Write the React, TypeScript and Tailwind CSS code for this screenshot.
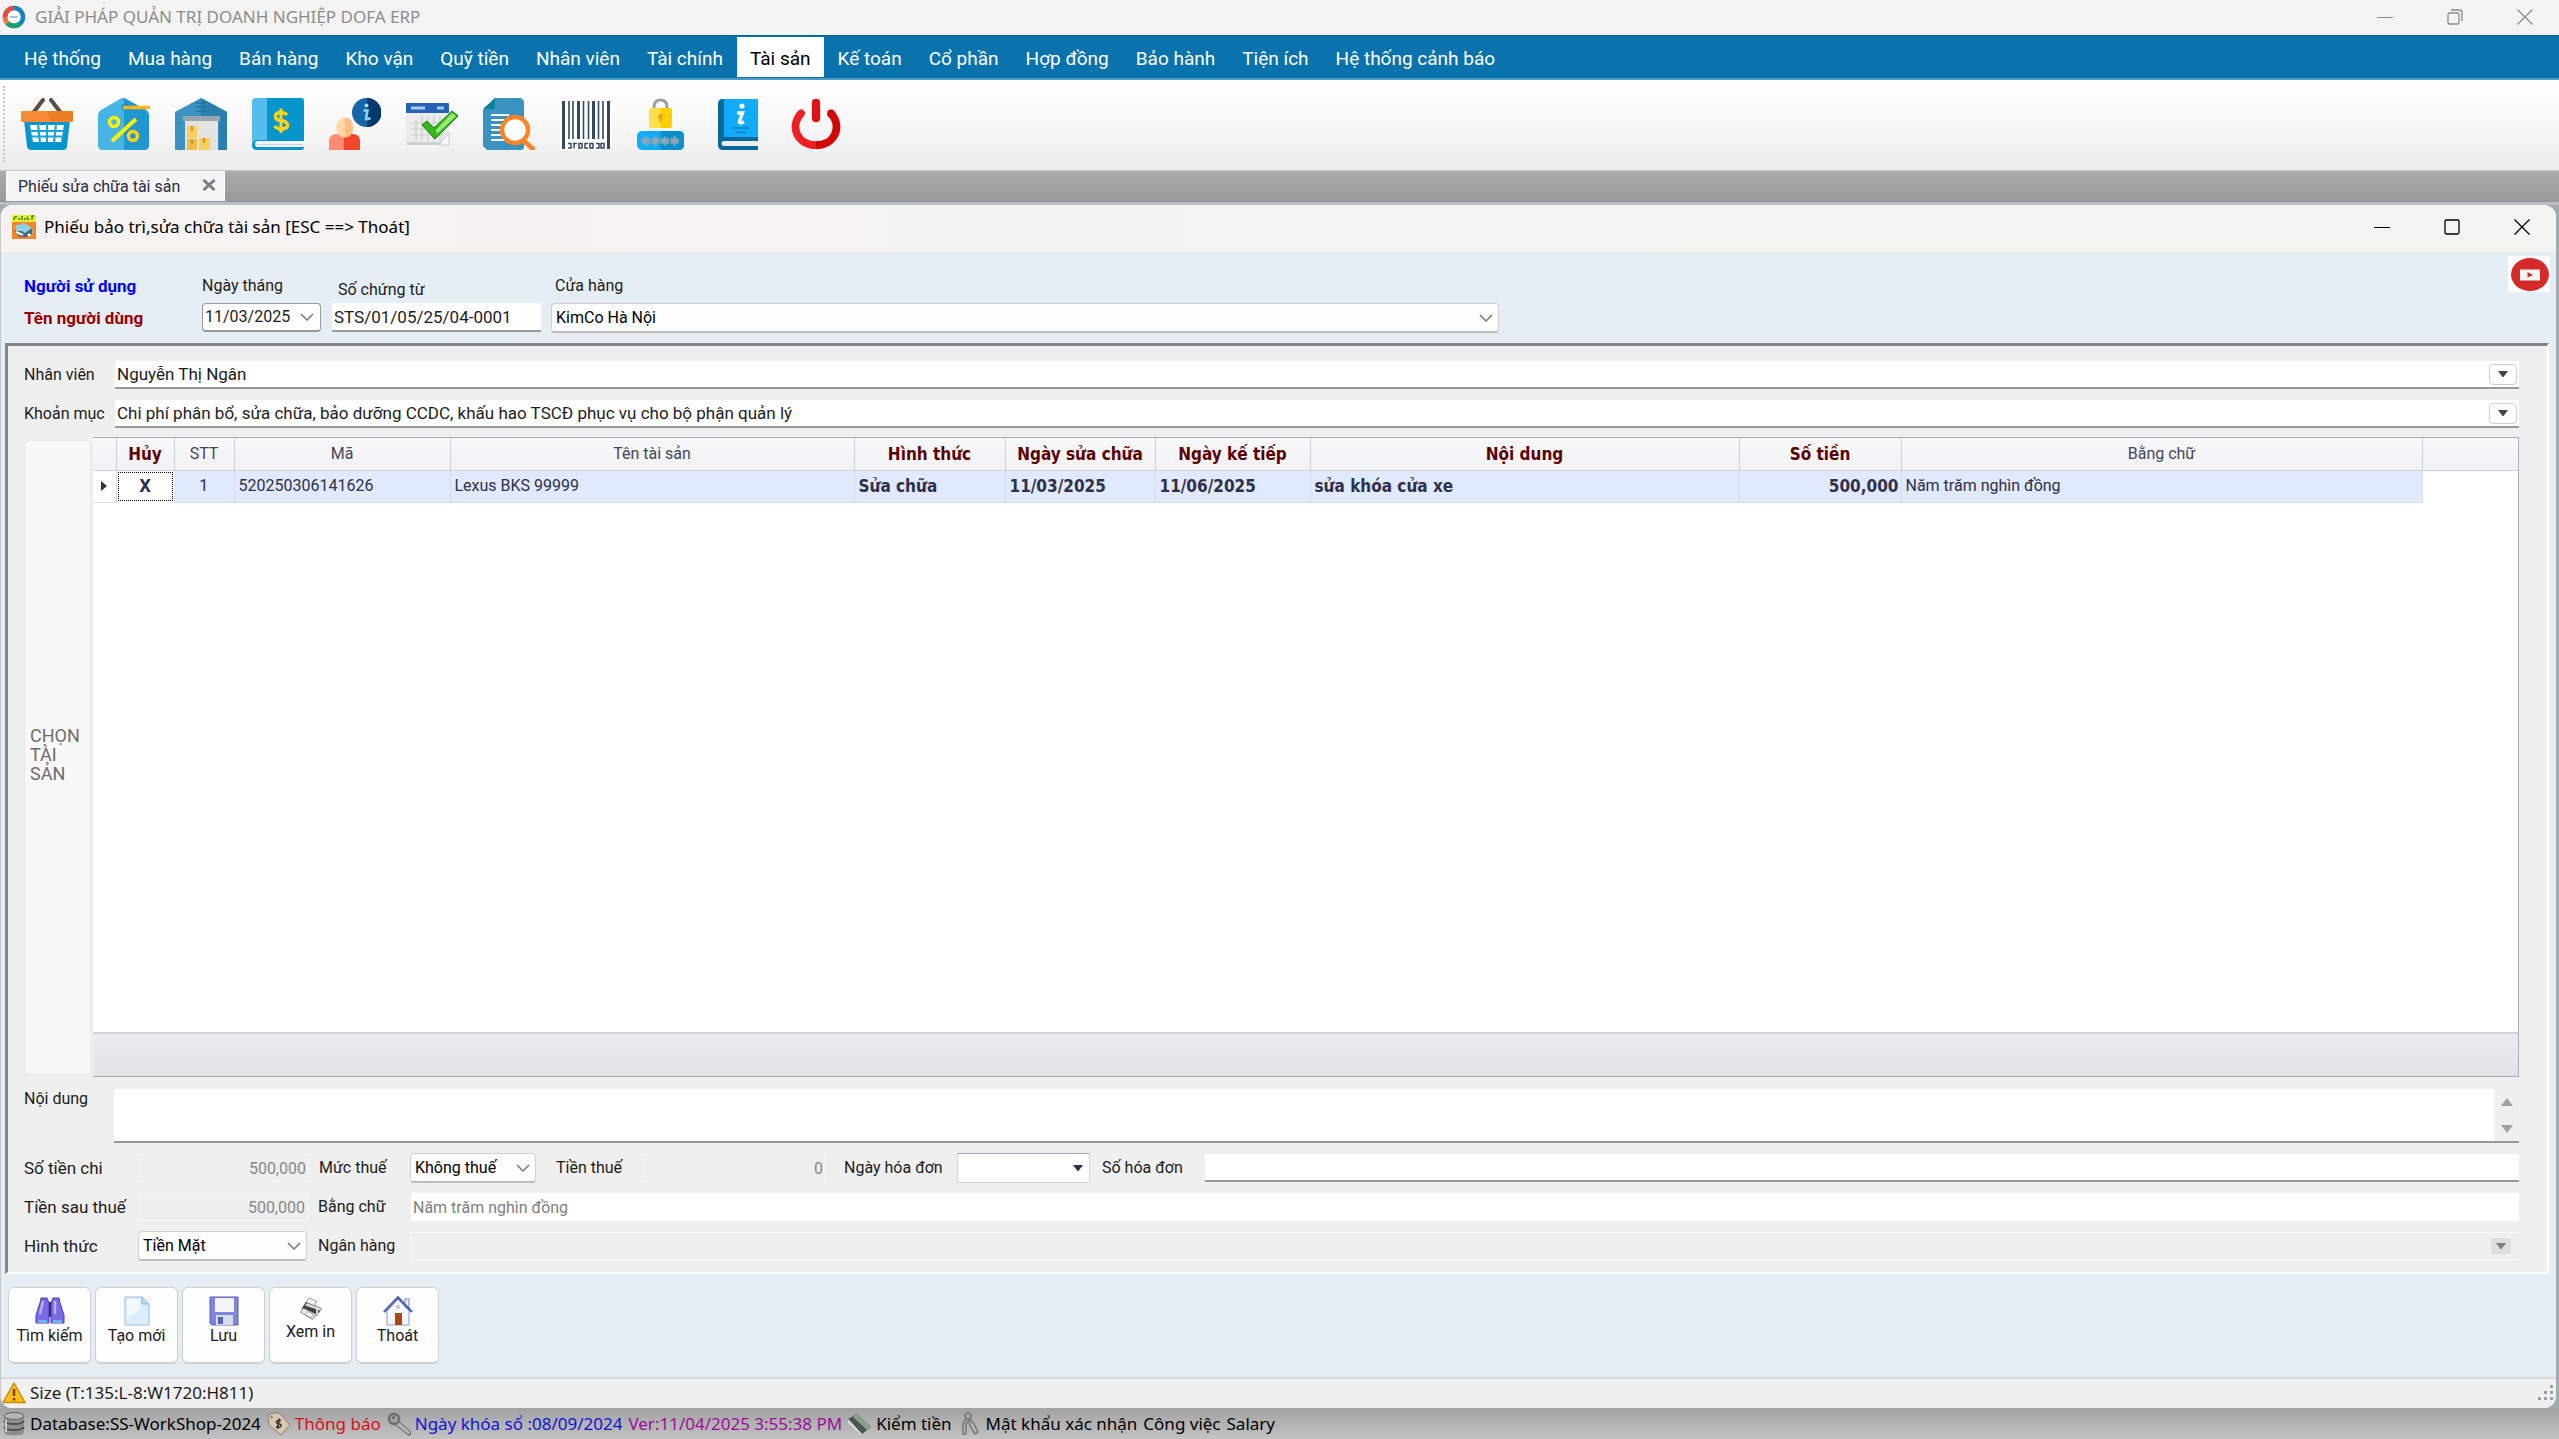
import React from 'react';
import clsx from 'clsx';

const MENU = [
  'Hệ thống', 'Mua hàng', 'Bán hàng', 'Kho vận', 'Quỹ tiền', 'Nhân viên', 'Tài chính', 'Tài sản',
  'Kế toán', 'Cổ phần', 'Hợp đồng', 'Bảo hành', 'Tiện ích', 'Hệ thống cảnh báo',
];

interface Column {
  title: string;
  width: string;
  bold?: boolean;
}

const COLUMNS: Column[] = [
  { title: 'Hủy', width: 'w-[58px]', bold: true },
  { title: 'STT', width: 'w-[60px]' },
  { title: 'Mã', width: 'w-[216px]' },
  { title: 'Tên tài sản', width: 'w-[404px]' },
  { title: 'Hình thức', width: 'w-[151px]', bold: true },
  { title: 'Ngày sửa chữa', width: 'w-[150px]', bold: true },
  { title: 'Ngày kế tiếp', width: 'w-[155px]', bold: true },
  { title: 'Nội dung', width: 'w-[429px]', bold: true },
  { title: 'Số tiền', width: 'w-[162px]', bold: true },
  { title: 'Bằng chữ', width: 'w-[521px]' },
];

/* ---------- toolbar icons ---------- */

const BasketIcon = () => (
  <svg viewBox="0 0 52 52" className="size-full">
    <path d="M12 15 L22 2 M40 15 L30 2" stroke="#5c4d3f" strokeWidth="4" strokeLinecap="round" />
    <path d="M3 22 H49 L46 48 Q45.500 52 42 52 H10 Q6.500 52 6 48 Z" fill="#0795d0" />
    <path d="M0 13 H52 V23 Q52 24 51 24 H1 Q0 24 0 23 Z" fill="#f68b33" />
    <path d="M26 13 H52 V23 H30 Z" fill="#ef7d22" />
    <path d="M9 27 H43 L40 44 H12 Z" fill="#fff" />
    <path d="M8 33 H44 M9 38.500 H43 M17 26 L19 45 M26 26 V45 M35 26 L33 45" stroke="#1ba3da" strokeWidth="2.200" />
  </svg>
);

const DiscountIcon = () => (
  <svg viewBox="0 0 52 52" className="size-full">
    <path d="M0 17 Q0 14 3 12 L22 1 Q25 -1 28 1 L48 12 Q51 14 51 17 V47 Q51 52 46 52 H5 Q0 52 0 47 Z" fill="#46b5e6" />
    <path d="M26 0 L48 12 Q51 14 51 17 V47 Q51 52 46 52 H26 Z" fill="#1f97d0" />
    <circle cx="27" cy="9" r="3.500" fill="#2d86b8" />
    <path d="M25 9.500 H52" stroke="#fdb515" strokeWidth="3.500" />
    <path d="M38 21 L14 43" stroke="#fff000" strokeWidth="4" />
    <circle cx="16" cy="24" r="4.500" fill="none" stroke="#fff000" strokeWidth="3.500" />
    <circle cx="35" cy="38" r="4.500" fill="none" stroke="#ffd21a" strokeWidth="3.500" />
  </svg>
);

const WarehouseIcon = () => (
  <svg viewBox="0 0 52 52" className="size-full">
    <path d="M0 14 L26 0 L52 14 V52 H0 Z" fill="#3a92c1" />
    <path d="M26 0 L52 14 V52 H44 V18 H26 Z" fill="#2a7fae" />
    <path d="M21 5 H31 M21 9 H31 M21 13 H31" stroke="#2372a0" strokeWidth="1.500" />
    <rect x="8" y="18" width="37" height="5" fill="#9aa5ad" />
    <rect x="10" y="23" width="33" height="29" fill="#e3e3df" />
    <rect x="12" y="28" width="10" height="12" fill="#f8cf5b" />
    <rect x="12" y="41" width="10" height="11" fill="#f2bd42" />
    <rect x="24" y="40" width="11" height="12" fill="#f8cf5b" />
    <path d="M17 28 V33 M17 41 V46 M29 40 V45" stroke="#d49a2a" strokeWidth="2.500" />
  </svg>
);

const MoneyBookIcon = () => (
  <svg viewBox="0 0 52 52" className="size-full">
    <path d="M5 0 H49 Q52 0 52 3 V49 Q52 52 49 52 H5 Q0 52 0 47 V5 Q0 0 5 0 Z" fill="#0695cc" />
    <path d="M5 0 H15 V42 H6 Q2 42 0 46 V5 Q0 0 5 0 Z" fill="#55bdec" />
    <path d="M6 43 H52 V49 H6 Q3 49 3 46 Q3 43 6 43 Z" fill="#f1f1f1" />
    <path d="M4 46.500 H51" stroke="#cfd5d9" />
    <path d="M35 17 Q33 14.500 29 14.500 Q23.500 14.500 23.500 18.500 Q23.500 22 29 22.500 Q35.500 23.500 35.500 27 Q35.500 31 29 31 Q25 31 22.500 28" fill="none" stroke="#ffd21a" strokeWidth="3.500" />
    <path d="M29 10.500 V35" stroke="#ffd21a" strokeWidth="3" />
  </svg>
);

const UserInfoIcon = () => (
  <svg viewBox="0 0 52 52" className="size-full">
    <path d="M0 52 V44 Q0 36 8 36 H15 V52 Z" fill="#ff8b72" />
    <path d="M15 36 H24 Q31 36 31 44 V52 H15 Z" fill="#f5452b" />
    <ellipse cx="15.500" cy="29.500" rx="8.300" ry="10" fill="#ffd6a5" />
    <path d="M16 19.500 Q24 20 24 29.500 Q24 39 16 39.500 Z" fill="#ffbd81" />
    <circle cx="37.500" cy="14.500" r="14.500" fill="#1766ab" />
    <path d="M38 0 A14.500 14.500 0 0 1 38 29 Z" fill="#00396b" />
    <circle cx="37.500" cy="7.500" r="2" fill="#9fd8fa" />
    <path d="M34.500 12.500 H38.500 L37 20.500 Q37 22 41.500 20" fill="none" stroke="#8dd0f8" strokeWidth="2.600" />
  </svg>
);

const CalendarCheckIcon = () => (
  <svg viewBox="0 0 52 52" className="size-full">
    <rect x="0" y="5" width="43" height="42" rx="1" fill="#ececec" />
    <rect x="1" y="44" width="42" height="3" fill="#cfcfcf" />
    <rect x="0" y="5" width="43" height="10" rx="1" fill="#2463b4" />
    <path d="M5 10 H19 M31 10 H38" stroke="#a9c8ef" strokeWidth="3" />
    <path d="M5 25 H38 M5 31 H38 M5 37 H38 M10 22 V43 M16 18 V43 M22 18 V43 M28 18 V43 M34 18 V43" stroke="#cbcbcb" strokeWidth="1.200" />
    <path d="M33 47 L43 35 V47 Z" fill="#fafafa" stroke="#c8c8c8" />
    <path d="M16 27 L21 23 L28 30 L46 13 L52 18 L29 41 Z" fill="#35b81e" stroke="#1d7f10" />
    <path d="M30 32 L46 15 L50 18 L31 36 Z" fill="#9be87f" />
  </svg>
);

const SearchDocIcon = () => (
  <svg viewBox="0 0 52 52" className="size-full">
    <path d="M12 0 H38 L41 3 V50 L39 52 H4 L0 48 V12 Z" fill="#3a92c1" />
    <path d="M12 0 V9 Q12 11 10 11 H0 Z" fill="#0f7f9f" />
    <path d="M8 17 H26 M8 22 H22 M8 27 H19 M8 32 H19 M8 37 H21 M8 42 H25" stroke="#fff" strokeWidth="2" />
    <path d="M41 43 L50 51" stroke="#fb8529" strokeWidth="5" strokeLinecap="round" />
    <circle cx="32" cy="32" r="13" fill="#fff" stroke="#fb8529" strokeWidth="4.500" />
  </svg>
);

const BarcodeIcon = () => (
  <svg viewBox="0 0 52 52" className="size-full">
    <rect width="52" height="52" fill="#fff" />
    <path d="M3.500 3 V51 M48.500 3 V51" stroke="#34495e" strokeWidth="3" />
    <path d="M18.500 3 V41 M33.500 3 V41" stroke="#34495e" strokeWidth="3" />
    <path d="M9 3 V41 M13 3 V41 M23.500 3 V41 M28.500 3 V41 M38.500 3 V41 M43 3 V41" stroke="#34495e" strokeWidth="1.600" />
    <path d="M8 45.500 H11 V50 H8 M14 45 V50.500 M17 45.500 H13 M19 45.500 H22 V50 H19 Z M28 45.500 H25 V50 H28 M30 45.500 H33 V50 H30 Z M36 45.500 H39 V50 H36 M41 45.500 H44 V50 H41 Z" fill="none" stroke="#34495e" strokeWidth="1.500" />
  </svg>
);

const PasswordIcon = () => (
  <svg viewBox="0 0 52 52" className="size-full">
    <path d="M17 12 V9 Q17 2 23.500 2 Q30 2 30 9 V12" fill="none" stroke="#9ba0a3" strokeWidth="3" />
    <rect x="12" y="10" width="23" height="20" rx="3" fill="#ffdf45" />
    <path d="M23.500 10 H32 Q35 10 35 13 V27 Q35 30 32 30 H23.500 Z" fill="#ffcf00" />
    <circle cx="23.500" cy="18.500" r="2.500" fill="#f59b16" />
    <path d="M23.500 19 V24" stroke="#f59b16" strokeWidth="2" />
    <rect x="0" y="33" width="47" height="19" rx="5" fill="#12acf8" />
    <path d="M23.500 33 H42 Q47 33 47 38 V47 Q47 52 42 52 H23.500 Z" fill="#0a91cc" />
    {[9, 18.500, 28, 37.500].map((x) => (
      <g key={x} stroke="#8fa5b1" strokeWidth="2.600">
        <path d={`M${x} 38.500 V47.500 M${x - 4} 41 L${x + 4} 45 M${x + 4} 41 L${x - 4} 45`} />
      </g>
    ))}
  </svg>
);

const InfoBookIcon = () => (
  <svg viewBox="0 0 52 52" className="size-full">
    <path d="M9 1 H44 V52 H9 Q4 52 4 47 V6 Q4 1 9 1 Z" fill="#06699c" />
    <rect x="10" y="1" width="34" height="38" fill="#12abfb" />
    <path d="M10 43 H44 V48 H10 Q7.500 48 7.500 45.500 Q7.500 43 10 43 Z" fill="#ececec" />
    <circle cx="28" cy="8" r="2.600" fill="#fff" />
    <path d="M23 15 H28.500 L25.500 23 Q24.500 26 30 24" fill="none" stroke="#fff" strokeWidth="3.400" />
    <path d="M18 30 H35 M21.500 34.500 H31.500" stroke="#0c7fba" strokeWidth="1.600" />
  </svg>
);

const PowerIcon = () => (
  <svg viewBox="0 0 54 52" className="size-full">
    <path d="M10.500 15 C-2 29 7 48 26 48" fill="none" stroke="#ef1f24" strokeWidth="8" strokeLinecap="round" />
    <path d="M41.500 15 C54 29 45 48 26 48" fill="none" stroke="#d20606" strokeWidth="8" />
    <circle cx="41.500" cy="15" r="4" fill="#d20606" />
    <path d="M26 4 V20" stroke="#e01216" strokeWidth="8.500" strokeLinecap="round" />
  </svg>
);

const TOOLS = [
  { label: 'Mua hàng', Icon: BasketIcon },
  { label: 'Khuyến mãi', Icon: DiscountIcon },
  { label: 'Kho', Icon: WarehouseIcon },
  { label: 'Sổ quỹ', Icon: MoneyBookIcon },
  { label: 'Thông tin người dùng', Icon: UserInfoIcon },
  { label: 'Lịch', Icon: CalendarCheckIcon },
  { label: 'Tra cứu', Icon: SearchDocIcon },
  { label: 'Mã vạch', Icon: BarcodeIcon },
  { label: 'Đổi mật khẩu', Icon: PasswordIcon },
  { label: 'Hướng dẫn', Icon: InfoBookIcon },
  { label: 'Thoát chương trình', Icon: PowerIcon },
];

/* ---------- action button icons ---------- */

const BinocularsIcon = () => (
  <svg viewBox="0 0 30 30" className="size-full">
    <rect x="11" y="6" width="8" height="15" fill="#22223a" />
    <path d="M6 2 H12 L14 7 V27 H1 V19 L5 7 Z" fill="#7a6ae6" stroke="#4b3cb4" />
    <path d="M18 2 H24 L25 7 L29 19 V27 H16 V7 Z" fill="#7a6ae6" stroke="#4b3cb4" />
    <path d="M8 5 L5 18 M20 5 L20 18" stroke="#b9b0fa" strokeWidth="2.500" />
    <path d="M3 25.500 H12 M18 25.500 H27" stroke="#6fb1f7" strokeWidth="3" />
  </svg>
);

const NewFileIcon = () => (
  <svg viewBox="0 0 30 30" className="size-full">
    <path d="M3 1 H20 L27 8 V29 H3 Z" fill="#dcedfb" stroke="#9dbfe0" />
    <path d="M5 3 H18 V14 L5 22 Z" fill="#f2f9fe" />
    <path d="M20 1 V8 H27 Z" fill="#b9dbf5" stroke="#8db4da" />
  </svg>
);

const SaveIcon = () => (
  <svg viewBox="0 0 30 30" className="size-full">
    <path d="M1 1 H29 V29 H3 L1 27 Z" fill="#8187d8" stroke="#5a60b4" />
    <rect x="6" y="2" width="19" height="14" fill="#f3f6fd" />
    <rect x="7" y="19" width="17" height="10" fill="#d7dbee" />
    <rect x="9" y="21" width="5" height="7" fill="#5a60b4" />
  </svg>
);

const PrinterIcon = () => (
  <svg viewBox="0 0 30 30" className="size-full">
    <path d="M9 8 L13 2 L21 6 L19 13 Z" fill="#f4f4f4" stroke="#8a8a8a" />
    <path d="M4 15 L9 7 L27 14 L22 23 Z" fill="#3f3f3f" />
    <path d="M10 8 L27 14 L26 17 L8 11 Z" fill="#dedede" stroke="#808080" strokeWidth="0.800" />
    <path d="M3 19 L6 14 L21 21 L17 27 Z" fill="#e8e8e8" stroke="#808080" />
    <path d="M8 21 L11 18 L18 21 L15 25 Z" fill="#fff" stroke="#9a9a9a" />
    <path d="M22 15 V22" stroke="#f2f2f2" strokeWidth="2" />
  </svg>
);

const HomeIcon = () => (
  <svg viewBox="0 0 30 30" className="size-full">
    <rect x="22" y="3" width="4" height="9" fill="#f0f0fa" stroke="#7a82bc" />
    <path d="M4 15 L15 3 L26 15 V29 H4 Z" fill="#f6f7fc" stroke="#8f97c8" />
    <path d="M1 16 L15 1.500 L29 16" fill="none" stroke="#4a63b4" strokeWidth="2.500" />
    <rect x="12" y="17" width="7" height="12" fill="#a94a10" />
    <rect x="13" y="9" width="4" height="4" fill="#c9cde0" />
  </svg>
);

const ACTIONS = [
  { label: 'Tìm kiếm', Icon: BinocularsIcon, size: 'size-[30px]' },
  { label: 'Tạo mới', Icon: NewFileIcon, size: 'size-[30px]' },
  { label: 'Lưu', Icon: SaveIcon, size: 'size-[30px]' },
  { label: 'Xem in', Icon: PrinterIcon, size: 'size-[26px]' },
  { label: 'Thoát', Icon: HomeIcon, size: 'size-[30px]' },
];

/* ---------- status icons ---------- */

const WarningIcon = () => (
  <svg viewBox="0 0 24 24" className="size-6 shrink-0">
    <path d="M12 2 L23 21.500 H1 Z" fill="#fbbf12" stroke="#c98a10" strokeWidth="1.500" strokeLinejoin="round" />
    <path d="M12 8 V15 M12 17 V19.500" stroke="#7a3d00" strokeWidth="2.500" />
  </svg>
);

const DatabaseIcon = () => (
  <svg viewBox="0 0 24 24" className="size-6 shrink-0">
    <path d="M2 4 V20 Q2 23.500 12 23.500 Q22 23.500 22 20 V4 Z" fill="#8e8e8e" />
    <path d="M2 9 Q4 12 12 12 Q20 12 22 9 M2 15 Q4 18 12 18 Q20 18 22 15" fill="none" stroke="#4f4f4f" strokeWidth="2" />
    <path d="M4 8 V20" stroke="#c8c8c8" strokeWidth="2" />
    <ellipse cx="12" cy="4" rx="10" ry="3.500" fill="#b5b5b5" stroke="#5f5f5f" />
  </svg>
);

const TagIcon = () => (
  <svg viewBox="0 0 24 24" className="size-6 shrink-0">
    <path d="M1 3 Q6 0 12 1 L23 13 L14 23 L2 13 Z" fill="#d9c9b2" stroke="#8f7d66" />
    <circle cx="4.500" cy="5" r="1.500" fill="#8a8a8a" />
    <path d="M14 8.500 Q9 8 9.500 10.500 Q10 12 12.500 12 Q15 12.500 13.500 14.500 Q12 16 9 14.500 M12.500 6.500 L10.500 17" fill="none" stroke="#40352a" strokeWidth="1.600" />
  </svg>
);

const KeyIcon = () => (
  <svg viewBox="0 0 24 24" className="size-6 shrink-0">
    <path d="M10 11 L22 21" stroke="#6d6d6d" strokeWidth="5" strokeLinecap="round" />
    <path d="M10 11 L21.500 20.500" stroke="#b5b5b5" strokeWidth="3" strokeLinecap="round" />
    <circle cx="7" cy="7" r="5" fill="#a2a2a2" stroke="#6d6d6d" strokeWidth="2.500" />
    <circle cx="6.500" cy="5.500" r="1.500" fill="#5e5e5e" />
  </svg>
);

const CashIcon = () => (
  <svg viewBox="0 0 24 24" className="size-6 shrink-0">
    <path d="M0 7 L9 2 L23 15 L14 22 Z" fill="#4b5554" />
    <path d="M5 5 L9 2 L23 15 L19 18 Z" fill="#86a088" />
    <path d="M0 7 L14 22 L13 23 L0 11 Z" fill="#d8d8d8" />
  </svg>
);

const KeyChainIcon = () => (
  <svg viewBox="0 0 24 24" className="size-6 shrink-0" fill="none" stroke="#777" strokeWidth="1.500">
    <circle cx="10" cy="4" r="3" />
    <path d="M8 7 L5 12 L5 22 H8 V12 L11 8 L12 14 L17 22 L20 20 L16 12 L12 7" />
  </svg>
);

const LogoIcon = () => (
  <svg viewBox="0 0 24 24" className="size-6 shrink-0" fill="none" strokeWidth="4.500">
    <circle cx="12" cy="12" r="9" fill="#fff" stroke="#1a7fc4" />
    <path d="M12 3 A9 9 0 0 0 3 12" stroke="#ea4c3a" />
    <path d="M3 12 A9 9 0 0 0 12 21" stroke="#f2784b" />
    <path d="M5.500 18 A9 9 0 0 0 18 18.500" stroke="#16a36a" />
    <path d="M8 12 H16" stroke="#9fc7e6" strokeWidth="2" />
  </svg>
);

const SaleSoftIcon = () => (
  <svg viewBox="0 0 24 24" className="size-6 shrink-0">
    <rect width="24" height="24" fill="#f3862a" />
    <rect width="24" height="7" fill="#e9ee2d" />
    <path d="M2 5 Q2 1 5 2 M7 5 V3 M10 5 V1 M13 5 V3 M16 2 Q14 3 17 5 M20 5 V1 H22" fill="none" stroke="#2f8a2f" strokeWidth="1.500" />
    <path d="M3 12 Q4 9 8 10 Q12 6 15 10 L20 13 L21 18 H6 Z" fill="#8fd0ee" />
    <path d="M2 16 H10 L13 18 L20 13 V18 L16 22 H8 Z" fill="#466a7c" />
    <path d="M4 17 L11 20" stroke="#fff" strokeWidth="2" />
    <circle cx="17" cy="20" r="1.500" fill="#fff" />
  </svg>
);

const YoutubeIcon = () => (
  <svg viewBox="0 0 42 36" className="h-9 w-[42px]">
    <rect width="42" height="36" fill="#fff" />
    <ellipse cx="22" cy="18.500" rx="19" ry="16.500" fill="#d52a2a" />
    <rect x="12" y="13.500" width="20" height="11" fill="#f5f5f5" />
    <path d="M19.500 16 L25 19 L19.500 21.500 Z" fill="#d52a2a" />
  </svg>
);

/* ---------- form bits ---------- */

const Chevron = () => (
  <svg viewBox="0 0 14 8" className="h-2 w-3.5" fill="none" stroke="#777" strokeWidth="1.500">
    <path d="M1 1 L7 7 L13 1" />
  </svg>
);

const Triangle = ({ up = false, className = 'w-3' }: { up?: boolean; className?: string }) => (
  <svg viewBox="0 0 12 8" className={className} fill="currentColor">
    <path d={up ? 'M0 8 L6 0 L12 8 Z' : 'M0 0 H12 L6 8 Z'} />
  </svg>
);

interface SelectProps {
  id: string;
  value: string;
  className?: string;
}

const Select = ({ id, value, className }: SelectProps) => (
  <div className={clsx('relative', className)}>
    <select
      id={id}
      className="h-[30px] w-full appearance-none rounded-sm border border-b-2 border-[#d0d0d0] border-b-[#bcbcbc] bg-[#fdfdfd] pl-1 text-black outline-none"
    >
      <option>{value}</option>
    </select>
    <span className="pointer-events-none absolute inset-y-0 right-1.5 flex items-center">
      <Chevron />
    </span>
  </div>
);

interface ComboProps {
  id: string;
  label: string;
  value: string;
}

// Wide text box with a drop button at its right end
const Combo = ({ id, label, value }: ComboProps) => (
  <div className="flex h-7 items-center">
    <label htmlFor={id} className="w-[91px] shrink-0">{label}</label>
    <div className="flex h-7 grow items-center border-b-2 border-[#999] bg-white pr-0.5">
      <input id={id} defaultValue={value} className="h-full grow px-0.5 text-[17px] outline-none" />
      <button
        type="button"
        aria-label={`Chọn ${label}`}
        className="flex h-[21px] w-7 items-center justify-center rounded border border-[#cfcfcf] bg-[#fdfdfd] text-[#444]"
      >
        <Triangle className="w-2.5" />
      </button>
    </div>
  </div>
);

interface AmountProps {
  id: string;
  value: string;
  className: string;
}

const Amount = ({ id, value, className }: AmountProps) => (
  <input
    id={id}
    disabled
    defaultValue={value}
    className={clsx('h-7 border border-[#f8f8f8] bg-[#efefef] pr-0.5 text-right text-[#888]', className)}
  />
);

const WindowButtons = ({ restored = false, className }: { restored?: boolean; className?: string }) => (
  <div className={clsx('flex items-center gap-[54px]', className)}>
    <button type="button" aria-label="Thu nhỏ">
      <svg viewBox="0 0 16 16" className="size-4" stroke="currentColor"><path d="M0 8.500 H16" /></svg>
    </button>
    <button type="button" aria-label="Phóng to">
      <svg viewBox="0 0 16 16" className="size-4" fill="none" stroke="currentColor" strokeWidth="1.300">
        {restored ? (
          <>
            <rect x="1" y="4" width="11" height="11" rx="1.500" />
            <path d="M4 1 H12.500 Q15 1 15 3.500 V12" />
          </>
        ) : (
          <rect x="1" y="1" width="14" height="14" rx="1.500" />
        )}
      </svg>
    </button>
    <button type="button" aria-label="Đóng">
      <svg viewBox="0 0 16 16" className="size-4" stroke="currentColor" strokeWidth="1.300">
        <path d="M0.500 0.500 L15.500 15.500 M15.500 0.500 L0.500 15.500" />
      </svg>
    </button>
  </div>
);

/* ---------- sections ---------- */

const AppHeader = () => (
  <header>
    <div className="flex h-[35px] items-center bg-[#f3f3f3] pr-[26px] pb-0.5 pl-0.5 font-['Noto_Sans',sans-serif] text-[17px] text-[#8c8c8c]">
      <LogoIcon />
      <h1 className="ml-[9px]">GIẢI PHÁP QUẢN TRỊ DOANH NGHIỆP DOFA ERP</h1>
      <WindowButtons restored className="ml-auto" />
    </div>
    <nav className="flex h-[45px] items-center gap-px border-t border-b-2 border-t-[#075e90] border-b-[#4a9cc8] bg-[#0a73ae] pl-[11px] text-[19px] text-white">
      {MENU.map((item) => (
        <button
          key={item}
          type="button"
          className={clsx('h-10 px-[13px] pt-1', item === 'Tài sản' && 'bg-white text-black')}
        >
          {item}
        </button>
      ))}
    </nav>
    <div className="flex h-[90px] items-center gap-[25px] bg-linear-to-b from-white via-[#f7f7f7] to-[#ebebeb] pb-0.5">
      <span className="-mr-[9px] ml-[3px] h-[76px] border-l-2 border-dotted border-[#c8c8c8]" />
      {TOOLS.map(({ label, Icon }) => (
        <button key={label} type="button" aria-label={label} className="size-[52px] shrink-0">
          <Icon />
        </button>
      ))}
    </div>
    <div className="flex h-[31px] items-end border-t border-[#c4c4c4] bg-linear-to-b from-[#ababab] to-[#999] pl-1.5">
      <div className="flex h-[30px] w-[219px] items-center border border-b-0 border-white bg-[#f4f4f4] pl-[11px] text-[16px] text-[#2c2c44]">
        Phiếu sửa chữa tài sản
        <button type="button" aria-label="Đóng thẻ" className="mr-2 ml-auto pb-1 text-[#7d7d88]">
          <svg viewBox="0 0 14 12" className="h-3 w-3.5" stroke="currentColor" strokeWidth="3">
            <path d="M1.500 1 L12.500 11 M12.500 1 L1.500 11" />
          </svg>
        </button>
      </div>
    </div>
  </header>
);

const VoucherHeader = () => (
  <div className="flex h-[91px] items-start pl-[23px]">
    <div className="w-[178px] pt-[18px] text-[17px] font-bold leading-8">
      <p className="text-[#0000ff]">Người sử dụng</p>
      <p className="text-[#990000]">Tên người dùng</p>
    </div>
    <div className="flex w-[130px] flex-col pt-[22px]">
      <label htmlFor="date" className="h-[29px] leading-6">Ngày tháng</label>
      <div className="flex h-[29px] w-[119px] items-center rounded-sm border border-b-2 border-[#999] bg-white pr-1.5">
        <input id="date" defaultValue="11/03/2025" className="w-full min-w-0 pl-0.5 outline-none" />
        <button type="button" aria-label="Chọn ngày" className="shrink-0"><Chevron /></button>
      </div>
    </div>
    <div className="flex w-[219px] flex-col pt-[22px]">
      <label htmlFor="number" className="h-[29px] pl-1.5 leading-8">Số chứng từ</label>
      <input
        id="number"
        defaultValue="STS/01/05/25/04-0001"
        className="h-[29px] w-[209px] border-b-2 border-[#999] bg-white px-0.5 text-[17px] outline-none"
      />
    </div>
    <div className="flex grow flex-col pt-[22px]">
      <label htmlFor="store" className="h-[29px] pl-1 leading-6">Cửa hàng</label>
      <Select id="store" value="KimCo Hà Nội" className="w-[948px]" />
    </div>
    <button type="button" aria-label="Video hướng dẫn" className="mt-1 mr-1.5"><YoutubeIcon /></button>
  </div>
);

// Wider face used for the emphasised grid columns
const BOLD_CELL = "font-['DejaVu_Sans_Condensed','DejaVu_Sans',sans-serif] text-[17px] font-bold";

const AssetTable = () => (
  <div className="flex grow flex-col border border-l-0 border-[#a9adbb] bg-white">
    <table className="w-full table-fixed border-collapse text-[#2f3049]">
      <thead>
        <tr className="h-8 bg-linear-to-b from-[#f8f8f9] to-[#f1f2f4]">
          <th className="w-[23px] border-r border-b border-[#cdcfd6]" />
          {COLUMNS.map(({ title, width, bold }) => (
            <th
              key={title}
              className={clsx(
                'border-r border-b border-[#cdcfd6] p-0',
                width,
                bold ? [BOLD_CELL, 'text-[#5a0000]'] : 'font-normal text-[#45465c]',
              )}
            >
              {title}
            </th>
          ))}
          <th className="border-b border-[#cdcfd6]" />
        </tr>
      </thead>
      <tbody>
        <tr className="h-8">
          <td className="border-r border-b border-[#dadce3] pl-2">
            <svg viewBox="0 0 6 10" className="h-2.5 w-1.5" fill="#2f3049"><path d="M0 0 L6 5 L0 10 Z" /></svg>
          </td>
          <td className="p-px">
            <button type="button" className={clsx('block h-[29px] w-full border border-dotted border-black bg-white', BOLD_CELL)}>X</button>
          </td>
          <td className="border-r border-b border-[#dadce3] bg-[#e1e9fc] text-center">1</td>
          <td className="border-r border-b border-[#dadce3] bg-[#e1e9fc] pl-1">520250306141626</td>
          <td className="border-r border-b border-[#dadce3] bg-[#e1e9fc] pl-1">Lexus BKS 99999</td>
          <td className={clsx('border-r border-b border-[#dadce3] bg-[#e1e9fc] pl-1', BOLD_CELL)}>Sửa chữa</td>
          <td className={clsx('border-r border-b border-[#dadce3] bg-[#e1e9fc] pl-1', BOLD_CELL)}>11/03/2025</td>
          <td className={clsx('border-r border-b border-[#dadce3] bg-[#e1e9fc] pl-1', BOLD_CELL)}>11/06/2025</td>
          <td className={clsx('border-r border-b border-[#dadce3] bg-[#e1e9fc] pl-1', BOLD_CELL)}>sửa khóa cửa xe</td>
          <td className={clsx('border-r border-b border-[#dadce3] bg-[#e1e9fc] pr-0.5 text-right', BOLD_CELL)}>500,000</td>
          <td className="border-r border-b border-[#dadce3] bg-[#e1e9fc] pl-1">Năm trăm nghìn đồng</td>
          <td />
        </tr>
      </tbody>
    </table>
    <div className="mt-auto h-11 border-t-2 border-[#d2d3da] bg-linear-to-b from-[#eaebef] to-[#e2e2e7]" />
  </div>
);

const PaymentFields = () => (
  <div className="flex flex-col gap-[11px] pt-[11px]">
    <div className="flex h-7 items-center">
      <label htmlFor="amount" className="w-[115px] text-[17px]">Số tiền chi</label>
      <Amount id="amount" value="500,000" className="w-[170px]" />
      <label htmlFor="tax-rate" className="w-[101px] pl-2.5">Mức thuế</label>
      <Select id="tax-rate" value="Không thuế" className="w-[126px]" />
      <label htmlFor="tax" className="w-[107px] pl-5">Tiền thuế</label>
      <Amount id="tax" value="0" className="w-[183px]" />
      <label htmlFor="invoice-date" className="w-[131px] pl-[18px]">Ngày hóa đơn</label>
      <div className="flex h-[30px] w-[133px] items-center border border-[#d3d4dd] border-t-[#a9adbb] bg-white pr-1.5">
        <input id="invoice-date" className="w-full min-w-0 outline-none" />
        <button type="button" aria-label="Chọn ngày hóa đơn" className="text-[#2f3049]"><Triangle className="w-2.5" /></button>
      </div>
      <label htmlFor="invoice-no" className="w-[115px] pl-3">Số hóa đơn</label>
      <input id="invoice-no" className="h-7 grow border-b-2 border-[#999] bg-white outline-none" />
    </div>
    <div className="flex h-7 items-center">
      <label htmlFor="total" className="w-[115px] text-[17px]">Tiền sau thuế</label>
      <Amount id="total" value="500,000" className="w-[169px]" />
      <label htmlFor="in-words" className="w-[103px] pl-2.5">Bằng chữ</label>
      <input id="in-words" readOnly defaultValue="Năm trăm nghìn đồng" className="h-7 grow bg-white px-0.5 text-[#808080] outline-none" />
    </div>
    <div className="flex h-7 items-center">
      <label htmlFor="method" className="w-[114px] text-[17px]">Hình thức</label>
      <Select id="method" value="Tiền Mặt" className="w-[169px]" />
      <label htmlFor="bank" className="w-[104px] pl-[11px]">Ngân hàng</label>
      <div className="flex h-7 grow items-center border-y border-l border-[#f9f9f9] pr-2">
        <input id="bank" disabled className="h-full grow" />
        <button type="button" disabled aria-label="Chọn ngân hàng" className="flex h-4 w-5 items-center justify-center rounded-xs bg-[#dedede] text-[#7d7d7d]">
          <Triangle className="w-2.5" />
        </button>
      </div>
    </div>
  </div>
);

const STATUS_ITEMS = [
  { text: 'Database:SS-WorkShop-2024', Icon: DatabaseIcon, className: 'text-black' },
  { text: 'Thông báo', Icon: TagIcon, className: 'text-[#d8101c]' },
  { text: 'Ngày khóa sổ :08/09/2024', Icon: KeyIcon, className: 'text-[#1212d6]' },
  { text: 'Ver:11/04/2025 3:55:38 PM', className: 'text-[#9a0f9a]' },
  { text: 'Kiểm tiền', Icon: CashIcon, className: 'text-black' },
  { text: 'Mật khẩu xác nhận', Icon: KeyChainIcon, className: 'text-black' },
  { text: 'Công việc', className: 'text-black' },
  { text: 'Salary', className: 'text-black' },
];

const App = () => (
  <div className="flex min-h-screen flex-col bg-[#a5a9b0] font-['Roboto','Noto_Sans',sans-serif] text-[16px] leading-5 text-[#1c1c1c]">
    <AppHeader />
    <div className="h-1 border-t border-[#8f949e] bg-[#b9bec7]" />

    <main className="mr-[3px] flex grow flex-col overflow-hidden rounded-xl border-l border-[#c9c9c9] bg-[#e6eef5]">
      <div className="flex h-[47px] items-center bg-linear-to-r from-[#f6f2f1] via-[#f3f3f3] to-[#f3f3f1] pr-[26px] pb-[3px] pl-[11px] font-['Noto_Sans',sans-serif] text-[17px] text-black">
        <SaleSoftIcon />
        <h2 className="ml-2">Phiếu bảo trì,sửa chữa tài sản [ESC ==&gt; Thoát]</h2>
        <WindowButtons className="ml-auto" />
      </div>

      <VoucherHeader />

      <section className="mr-[7px] ml-1 flex grow flex-col border-t-[3px] border-r-2 border-b-2 border-l-[3px] border-t-[#82858a] border-r-white border-b-white border-l-[#82858a] bg-[#efefef] pt-[15px] pr-7 pb-3 pl-4">
        <div className="flex flex-col gap-[11px]">
          <Combo id="employee" label="Nhân viên" value="Nguyễn Thị Ngân" />
          <Combo id="item" label="Khoản mục" value="Chi phí phân bổ, sửa chữa, bảo dưỡng CCDC, khấu hao TSCĐ phục vụ cho bộ phận quản lý" />
        </div>

        <div className="mt-[9px] flex grow">
          <button
            type="button"
            className="mt-[3px] mr-[2px] mb-[2px] w-[67px] rounded border border-[#e8e8e8] bg-[#f8f8f8] pr-3 pb-1.5 pl-[5px] text-left text-[18px] leading-[19px] text-[#6d6d6d]"
          >
            CHỌN TÀI SẢN
          </button>
          <AssetTable />
        </div>

        <div className="mt-3 flex">
          <label htmlFor="note" className="w-[90px]">Nội dung</label>
          <div className="flex h-[54px] grow border-b-2 border-[#999] bg-white">
            <textarea id="note" className="grow resize-none outline-none" />
            <div className="flex w-[25px] flex-col items-center justify-center gap-[17px] bg-[#f0f0f0] text-[#a0a0a0]">
              <button type="button" aria-label="Cuộn lên"><Triangle up className="h-2.5 w-3" /></button>
              <button type="button" aria-label="Cuộn xuống"><Triangle className="h-2.5 w-3" /></button>
            </div>
          </div>
        </div>

        <PaymentFields />
      </section>

      <div className="flex gap-1 py-[13px] pl-[7px]">
        {ACTIONS.map(({ label, Icon, size }) => (
          <button
            key={label}
            type="button"
            className="flex h-[77px] w-[83px] flex-col items-center rounded-md border border-b-2 border-[#d0d0d0] bg-[#fdfdfd] pt-2"
          >
            <span className={size}><Icon /></span>
            {label}
          </button>
        ))}
      </div>

      <div className="flex h-[31px] items-center gap-1 border-t-2 border-[#d5d9dc] bg-[#f0f0f0] pb-0.5 pl-px font-['Noto_Sans',sans-serif] text-[17px]">
        <WarningIcon />
        Size (T:135:L-8:W1720:H811)
        <svg viewBox="0 0 16 16" className="mr-0.5 ml-auto size-4" fill="#a0a0a0">
          <path d="M12 0 h3 v3 h-3 z M12 6 h3 v3 h-3 z M6 6 h3 v3 h-3 z M12 12 h3 v3 h-3 z M6 12 h3 v3 h-3 z M0 12 h3 v3 h-3 z" />
        </svg>
      </div>
    </main>

    <footer className="flex h-[31px] items-center gap-1.5 bg-linear-to-b from-[#a2a2a2] to-[#c2c2c2] pl-0.5 font-['Noto_Sans',sans-serif] text-[17px]">
      {STATUS_ITEMS.map(({ text, Icon, className }) => (
        <span key={text} className={clsx('flex items-center gap-1', className)}>
          {Icon && <Icon />}
          {text}
        </span>
      ))}
    </footer>
  </div>
);

export default App;
